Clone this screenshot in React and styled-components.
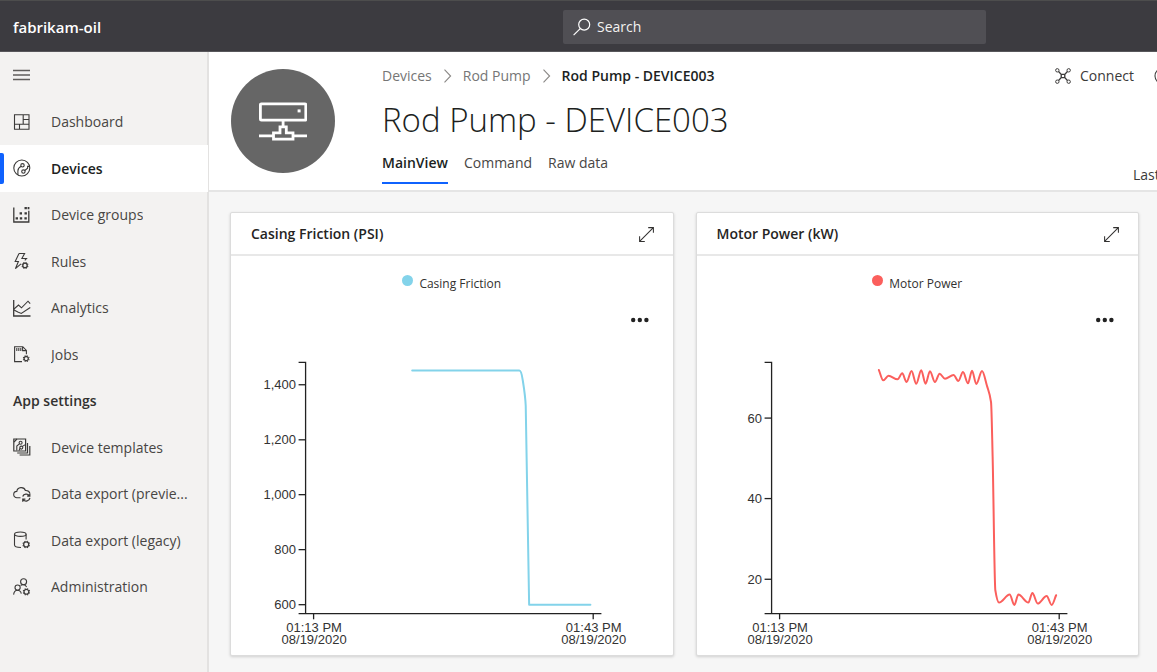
import React from "react";
import styled, { createGlobalStyle } from "styled-components";

const GlobalStyle = createGlobalStyle`
  *, *::before, *::after { box-sizing: border-box; }
  html, body, #root { height: 100%; }
  body {
    margin: 0;
    overflow: hidden;
    background: #f6f6f6;
    color: #323130;
    font-family: "Open Sans", "Noto Sans", sans-serif;
    font-size: 14px;
    line-height: 20px;
  }
  button, input { font: inherit; color: inherit; }
  button { padding: 0; border: 0; background: none; cursor: pointer; }
  a { color: inherit; text-decoration: none; }
`;

const Shell = styled.div`
  display: grid;
  grid-template-rows: 52px 1fr;
  min-height: 100%;
`;

const TopBar = styled.header`
  display: grid;
  grid-template-columns: 550px 1fr 158px;
  align-items: center;
  padding: 1px 13px 0;
  background: #3c3b40;
  border-top: 1px solid #4d4d4d;
  border-bottom: 1px solid #58575b;
`;

const Brand = styled.a`
  color: #fff;
  font-size: 15px;
  font-weight: 600;
`;

const SearchBox = styled.label`
  display: flex;
  align-items: center;
  gap: 6px;
  height: 34px;
  padding: 0 10px;
  border-radius: 2px;
  background: #504f54;
  color: #fff;
`;

const SearchInput = styled.input`
  flex: 1;
  min-width: 0;
  padding: 0;
  border: 0;
  outline: 0;
  background: none;
  &::placeholder { color: #f3f2f1; opacity: 1; }
`;

const Body = styled.div`
  display: grid;
  grid-template-columns: 209px minmax(0, 1fr);
`;

const Sidebar = styled.nav`
  background: #f3f2f1;
  border-right: 2px solid #e3e2e1;
`;

const NavGrid = styled.div`
  display: grid;
  grid-template-rows: repeat(12, 1fr);
  height: 558px;
`;

const MenuButton = styled.button`
  display: flex;
  align-items: center;
  padding-left: 13px;
  color: #605e5c;
`;

const NavItem = styled.a`
  position: relative;
  display: flex;
  align-items: center;
  gap: 20px;
  padding: 0 20px 0 13px;
  color: ${(p) => (p.$active ? "#201f1e" : "#484644")};
  background: ${(p) => (p.$active ? "#fff" : "transparent")};
  font-weight: ${(p) => (p.$active ? 600 : 400)};
  white-space: nowrap;
  svg { flex: none; color: #3b3a39; }
  span { padding-top: 1px; overflow: hidden; text-overflow: ellipsis; }
  &::before {
    content: "";
    display: ${(p) => (p.$active ? "block" : "none")};
    position: absolute;
    left: 0;
    top: 8px;
    bottom: 8px;
    width: 4px;
    border-radius: 0 2px 2px 0;
    background: #0f62fe;
  }
`;

const NavHeading = styled.h2`
  display: flex;
  align-items: center;
  margin: 0;
  padding: 1px 0 0 13px;
  font-size: 14px;
  font-weight: 600;
`;

const Main = styled.main`
  min-width: 0;
`;

const DeviceHeader = styled.section`
  display: grid;
  grid-template-columns: 104px minmax(0, 1fr) 102px;
  column-gap: 47px;
  height: 140px;
  padding-left: 22px;
  background: #fff;
  border-bottom: 2px solid #e5e5e5;
`;

const Avatar = styled.div`
  display: flex;
  align-items: center;
  justify-content: center;
  width: 104px;
  height: 104px;
  margin-top: 17px;
  border-radius: 50%;
  background: #666;
`;

const TitleBlock = styled.div`
  display: flex;
  flex-direction: column;
  padding-top: 14px;
  white-space: nowrap;
`;

const Breadcrumb = styled.nav`
  display: flex;
  align-items: center;
  gap: 11px;
  color: #767676;
`;

const Current = styled.span`
  color: #201f1e;
  font-weight: 600;
`;

const Title = styled.h1`
  margin: 8px 0 7px;
  color: #201f1e;
  font-size: 33px;
  font-weight: 300;
  line-height: 52px;
`;

const Tabs = styled.div`
  display: flex;
  gap: 16px;
`;

const Tab = styled.button`
  height: 31px;
  padding-bottom: 9px;
  border-bottom: 2px solid ${(p) => (p.$active ? "#0f62fe" : "transparent")};
  color: ${(p) => (p.$active ? "#201f1e" : "#484644")};
  font-weight: ${(p) => (p.$active ? 600 : 400)};
`;

const Commands = styled.div`
  display: flex;
  flex-direction: column;
  justify-content: space-between;
  padding: 14px 0 5px;
  overflow: hidden;
  white-space: nowrap;
  color: #3b3a39;
`;

const CommandRow = styled.div`
  display: flex;
  gap: 20px;
`;

const Command = styled.button`
  display: flex;
  flex: none;
  align-items: center;
  gap: 9px;
`;

const Status = styled.div`
  padding-left: 78px;
`;

const Tiles = styled.section`
  display: grid;
  grid-template-columns: repeat(2, minmax(0, 1fr));
  gap: 22px;
  padding: 20px 18px 15px 21px;
`;

const Card = styled.article`
  background: #fff;
  border: 1px solid #dcdcdc;
  border-radius: 2px;
  box-shadow: 0 1px 3px rgba(0, 0, 0, 0.16);
`;

const CardHeader = styled.header`
  display: flex;
  align-items: center;
  justify-content: space-between;
  height: 43px;
  padding: 1px 18px 0 20px;
  border-bottom: 2px solid #e8e8e8;
`;

const CardTitle = styled.h3`
  margin: 0;
  color: #252423;
  font-size: 14px;
  font-weight: 600;
`;

const IconButton = styled.button`
  display: flex;
`;

const Legend = styled.div`
  display: flex;
  justify-content: center;
  gap: 6px;
  padding-top: 18px;
  font-size: 12px;
`;

const Dot = styled.span`
  width: 11px;
  height: 11px;
  margin-top: 1px;
  border-radius: 50%;
  background: ${(p) => p.$color};
`;

const MoreRow = styled.div`
  display: flex;
  justify-content: flex-end;
  align-items: center;
  height: 46px;
  padding: 6px 24px 0 0;
`;

const ChartSvg = styled.svg`
  display: block;
  width: 100%;
  height: auto;
  text {
    fill: #333;
    font-family: "Liberation Sans", Arial, sans-serif;
    font-size: 13px;
  }
`;

const Glyph = ({ size = 18, children, ...rest }) => (
  <svg width={size} height={size} viewBox="0 0 18 18" fill="none" stroke="currentColor" strokeWidth="1.1" aria-hidden="true" {...rest}>
    {children}
  </svg>
);

const Gear = ({ x, y, r = 2 }) => (
  <g transform={`translate(${x} ${y})`}>
    <circle r={r} strokeWidth="1.3" />
    {[22, 67, 112, 157, 202, 247, 292, 337].map((a) => (
      <path key={a} d={`M0 ${-r - 0.3}V${-r - 1.3}`} transform={`rotate(${a})`} strokeWidth="1.2" />
    ))}
  </g>
);

const icons = {
  dashboard: <path d="M1.5 1.8H16V16.2H1.5ZM10.2 1.8V11.2M1.5 11.2H16M10.2 6.5H16M6.5 11.2V16.2" />,
  devices: (
    <>
      <circle cx="8.8" cy="9" r="8" />
      <circle cx="9.5" cy="6.3" r="1.7" />
      <circle cx="10.4" cy="12.6" r="1.7" />
      <path d="M8.2 7.3C5.8 8.4 4.9 9.6 4.9 12V16M11.8 11.5L14.6 9.2V7.4H16.5" />
    </>
  ),
  groups: (
    <>
      <path d="M.8 1.5V16H15.8V4.8" strokeWidth="1.3" />
      <path d="M11.5 2.2h2.4M14.6 2.2h1.8M6.6 7.4h2.4M11.5 7.4h2.4M2.6 12.4h2.4M6.8 12.4h2.4M11.4 12.4h2.4" strokeWidth="2.3" />
    </>
  ),
  rules: (
    <>
      <path d="M6 1.5H11.6L8.9 6.5H13.5L11.8 8.4M6 1.5L2.2 9.5H5.4L2.4 16.7L8 11.8" />
      <Gear x={12} y={13.4} r={2.2} />
    </>
  ),
  analytics: (
    <>
      <path d="M.7 1V17H17.5" strokeWidth="1.3" />
      <path d="M1 10L5.5 6L8.5 8.8L15 2.2L17.2 4.6M1 11L4.8 13L8.3 14.5L17.3 8.5" />
    </>
  ),
  jobs: (
    <>
      <path d="M9 16.6H1.6V1.7H9.8L13.4 5.4V9.2M9.6 1.8V5.6H13.3" />
      <path d="M3.8 3V6M5.8 3V6M7.8 3V6" />
      <Gear x={13.2} y={13.6} r={2.1} />
    </>
  ),
  templates: (
    <>
      <path d="M.8 1H12.6V13H.8ZM14.5 5V15H4.2M16.8 8V17H6.6" strokeWidth="1.2" />
      <circle cx="7.6" cy="4.8" r="1.5" />
      <circle cx="8.3" cy="9.6" r="1.5" />
      <path d="M6.4 5.8L3.8 8V12.6M9.4 8.4L12.4 6.6M7 10.2L6 12.6M1 4L4 1" />
    </>
  ),
  cloud: (
    <>
      <path d="M7.5 12.8H4A3.2 3.2 0 0 1 3.8 6.4C4.4 1.8 11 1.2 12.4 5.5C14.6 5.3 16.4 6.6 16.9 8.4" />
      <path d="M9.7 11.6A3.8 3.8 0 0 1 16.4 10.8M16.8 8.4V11H14.2M16.9 12.8A3.8 3.8 0 0 1 10.2 14.6M9.8 16.7V14.2H12.4" strokeWidth="1.3" />
    </>
  ),
  database: (
    <>
      <ellipse cx="7.3" cy="3.2" rx="5.8" ry="2.2" />
      <path d="M1.5 3.2V14C1.5 15.5 4 16.5 8 16.5M13.1 3.2V8.6" />
      <Gear x={13.2} y={13.4} r={2.5} />
    </>
  ),
  admin: (
    <>
      <circle cx="10.6" cy="3.8" r="3" />
      <circle cx="4.6" cy="9.6" r="2.6" />
      <path d="M.6 16.6C.9 14 2.4 12.3 4.5 12.3C6.5 12.3 7.8 13.6 8.3 15.6M7.6 7.5C9 6.4 12.2 6.3 13.6 8.9" />
      <Gear x={13.4} y={13.8} r={2.4} />
    </>
  ),
};

const Chevron = () => (
  <svg width="9" height="14" viewBox="0 0 9 14" fill="none" stroke="#8a8886" strokeWidth="1.1" aria-hidden="true">
    <path d="M1.5 .7L7.6 7L1.5 13.3" />
  </svg>
);

const Expand = () => (
  <Glyph size={17} strokeWidth="1.1">
    <path d="M2 16L16 2M10.8 1.7H16.3V7.2M1.7 10.8V16.3H7.2" />
  </Glyph>
);

const navMain = [
  ["dashboard", "Dashboard"],
  ["devices", "Devices"],
  ["groups", "Device groups"],
  ["rules", "Rules"],
  ["analytics", "Analytics"],
  ["jobs", "Jobs"],
];

const navSettings = [
  ["templates", "Device templates"],
  ["cloud", "Data export (previe..."],
  ["database", "Data export (legacy)"],
  ["admin", "Administration"],
];

const pressurePath = "M181 30.4H288C289.6 30.4 290.4 33 291.4 40C293 50 294 56 294.4 66C295 100 295.6 160 297.8 264.4H359";

const powerPoints = [
  [181.7, 30], [186, 40.3], [191.3, 35.7], [200.3, 39.3], [205, 33.3], [209.3, 42], [214.3, 31],
  [219, 43.7], [224, 30.3], [228.3, 43.7], [232.7, 31.3], [237.7, 42], [242.3, 33.7], [247.7, 38.7],
  [256.3, 35], [261, 41], [265.7, 32], [270.7, 43.3], [274.7, 30.7], [279, 44], [284.7, 31],
  [289.7, 46], [293.7, 62], [295.3, 116.7], [298, 250], [301.7, 262.3], [312.3, 254.3], [317, 264.7],
  [321, 254.3], [331, 262.3], [335, 252.7], [340.3, 263.3], [349.3, 255.7], [354.3, 264.7], [358.7, 255],
];

// Monotone cubic interpolation through the sample points.
function smoothPath(points) {
  const slope = (a, b) => (b[1] - a[1]) / (b[0] - a[0]);
  const tangents = points.map((p, i) => {
    if (i === 0) return slope(p, points[1]);
    if (i === points.length - 1) return slope(points[i - 1], p);
    const s0 = slope(points[i - 1], p);
    const s1 = slope(p, points[i + 1]);
    return s0 * s1 <= 0 ? 0 : (2 * s0 * s1) / (s0 + s1);
  });
  return points.reduce((d, p, i) => {
    if (i === 0) return `M${p[0]} ${p[1]}`;
    const q = points[i - 1];
    const h = (p[0] - q[0]) / 3;
    return `${d}C${q[0] + h} ${q[1] + h * tangents[i - 1]} ${p[0] - h} ${p[1] - h * tangents[i]} ${p[0]} ${p[1]}`;
  }, "");
}

const charts = [
  {
    title: "Casing Friction (PSI)",
    series: "Casing Friction",
    color: "#83d3ea",
    path: pressurePath,
    ticks: [["1,400", 44.7], ["1,200", 99.7], ["1,000", 154.5], ["800", 209.4], ["600", 264.4]],
  },
  {
    title: "Motor Power (kW)",
    series: "Motor Power",
    color: "#fb5f5c",
    path: smoothPath(powerPoints),
    ticks: [["60", 78], ["40", 158.4], ["20", 239]],
  },
];

const times = [["01:13 PM", 82.5], ["01:43 PM", 361.8]];

function ChartCard({ title, series, color, path, ticks }) {
  return (
    <Card>
      <CardHeader>
        <CardTitle>{title}</CardTitle>
        <IconButton aria-label={`Expand ${title}`}><Expand /></IconButton>
      </CardHeader>
      <Legend><Dot $color={color} />{series}</Legend>
      <MoreRow>
        <IconButton aria-label={`More options for ${title}`}>
          <svg width="18" height="6" viewBox="0 0 18 6" fill="#222" aria-hidden="true">
            <circle cx="2.2" cy="3" r="2.2" /><circle cx="8.8" cy="3" r="2.2" /><circle cx="15.4" cy="3" r="2.2" />
          </svg>
        </IconButton>
      </MoreRow>
      <ChartSvg viewBox="0 0 441 315" role="img" aria-label={title}>
        <path d="M67.5 22.3H74.5V273.4M67.5 273.4H370" fill="none" stroke="#222" strokeWidth="1.3" />
        {ticks.map(([label, y]) => (
          <g key={label}>
            <path d={`M67.5 ${y}H74.5`} stroke="#222" strokeWidth="1.3" />
            <text x="65" y={y + 4.5} textAnchor="end">{label}</text>
          </g>
        ))}
        {times.map(([label, x]) => (
          <g key={label}>
            <path d={`M${x} 273.4V279`} stroke="#222" strokeWidth="1.3" />
            <text x={x + 0.5} y="292" textAnchor="middle">{label}</text>
            <text x={x + 0.5} y="304" textAnchor="middle">08/19/2020</text>
          </g>
        ))}
        <path d={path} fill="none" stroke={color} strokeWidth="2" strokeLinecap="round" strokeLinejoin="round" />
      </ChartSvg>
    </Card>
  );
}

const renderNav = ([icon, label]) => (
  <NavItem key={label} href="#" $active={label === "Devices"}>
    <Glyph>{icons[icon]}</Glyph>
    <span>{label}</span>
  </NavItem>
);

export default function App() {
  return (
    <>
      <GlobalStyle />
      <Shell>
        <TopBar>
          <Brand href="#">fabrikam-oil</Brand>
          <SearchBox>
            <Glyph strokeWidth="1.2">
              <circle cx="11.2" cy="6.6" r="5.5" />
              <path d="M7.2 10.6L.6 17.2" />
            </Glyph>
            <SearchInput type="search" placeholder="Search" aria-label="Search" />
          </SearchBox>
        </TopBar>
        <Body>
          <Sidebar aria-label="Main">
            <NavGrid>
              <MenuButton aria-label="Toggle navigation">
                <Glyph><path d="M0 4.5H17M0 9H17M0 13.5H17" strokeWidth="1.3" /></Glyph>
              </MenuButton>
              {navMain.map(renderNav)}
              <NavHeading>App settings</NavHeading>
              {navSettings.map(renderNav)}
            </NavGrid>
          </Sidebar>
          <Main>
            <DeviceHeader>
              <Avatar>
                <svg width="48" height="40" viewBox="0 0 48 40" fill="none" stroke="#fff" strokeWidth="2.8" aria-hidden="true">
                  <rect x="1.4" y="2.8" width="45.4" height="16.4" rx="1" />
                  <rect x="38.6" y="8.4" width="3" height="3" fill="#fff" stroke="none" />
                  <path d="M24.1 19V25.5M21 25.8H27.3V31.8H34V38.2H14.5V31.8H21ZM0 34.9H14.5M34 34.9H48.2" />
                </svg>
              </Avatar>
              <TitleBlock>
                <Breadcrumb aria-label="Breadcrumb">
                  <a href="#">Devices</a>
                  <Chevron />
                  <a href="#">Rod Pump</a>
                  <Chevron />
                  <Current aria-current="page">Rod Pump - DEVICE003</Current>
                </Breadcrumb>
                <Title>Rod Pump - DEVICE003</Title>
                <Tabs role="tablist">
                  <Tab role="tab" aria-selected="true" $active>MainView</Tab>
                  <Tab role="tab" aria-selected="false">Command</Tab>
                  <Tab role="tab" aria-selected="false">Raw data</Tab>
                </Tabs>
              </TitleBlock>
              <Commands>
                <CommandRow>
                  <Command>
                    <Glyph size={16}>
                      <circle cx="2.6" cy="2.6" r="1.9" /><circle cx="15.4" cy="2.6" r="1.9" />
                      <circle cx="2.6" cy="15.4" r="1.9" /><circle cx="15.4" cy="15.4" r="1.9" />
                      <path d="M4 4L7 7.2H11L14 4M4 14L7 10.8H11L14 14M7 7.2V10.8M11 7.2V10.8" strokeWidth="1.5" />
                    </Glyph>
                    Connect
                  </Command>
                  <Command aria-label="More commands">
                    <Glyph><circle cx="9" cy="9" r="8" /></Glyph>
                  </Command>
                </CommandRow>
                <Status>Last</Status>
              </Commands>
            </DeviceHeader>
            <Tiles>
              {charts.map((chart) => <ChartCard key={chart.title} {...chart} />)}
            </Tiles>
          </Main>
        </Body>
      </Shell>
    </>
  );
}
